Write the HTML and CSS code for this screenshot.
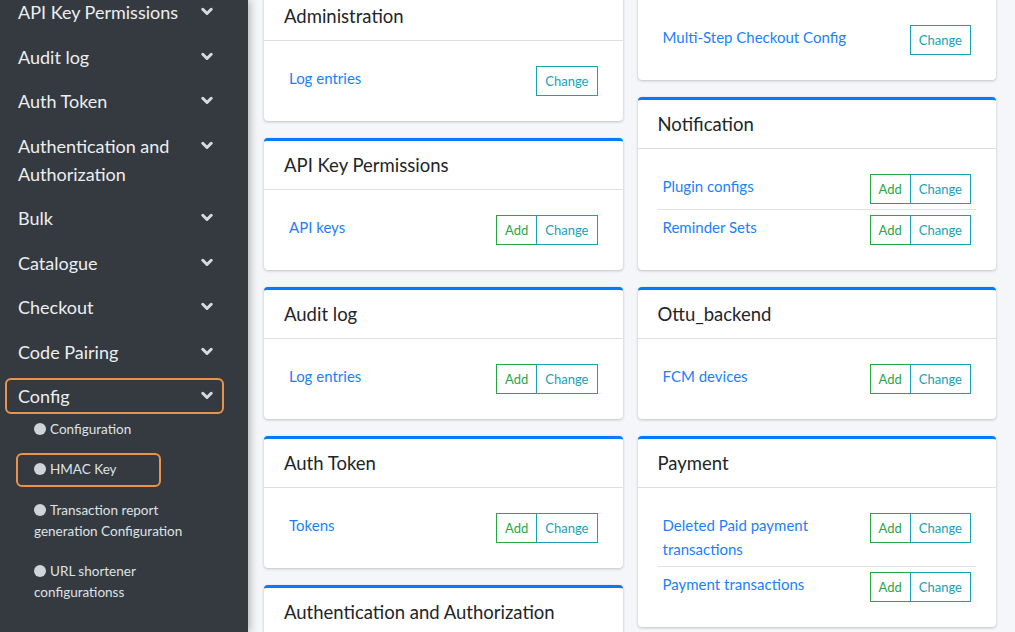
FILE: index.html
```html
<!DOCTYPE html>
<html lang="en">
<head>
<meta charset="utf-8">
<title>Site administration</title>
<link rel="stylesheet" href="styles.css">
</head>
<body>
<div class="layout">
  <aside class="sidebar">
    <ul class="nav">
      <li class="nav-item"><a class="nav-link"><span class="nav-text">API Key Permissions</span><svg class="chev" viewBox="0 0 12 28"><path d="M1.8 11.3 L6 15.5 L10.2 11.3"/></svg></a></li>
      <li class="nav-item"><a class="nav-link"><span class="nav-text">Audit log</span><svg class="chev" viewBox="0 0 12 28"><path d="M1.8 11.3 L6 15.5 L10.2 11.3"/></svg></a></li>
      <li class="nav-item"><a class="nav-link"><span class="nav-text">Auth Token</span><svg class="chev" viewBox="0 0 12 28"><path d="M1.8 11.3 L6 15.5 L10.2 11.3"/></svg></a></li>
      <li class="nav-item"><a class="nav-link"><span class="nav-text">Authentication and Authorization</span><svg class="chev" viewBox="0 0 12 28"><path d="M1.8 11.3 L6 15.5 L10.2 11.3"/></svg></a></li>
      <li class="nav-item"><a class="nav-link"><span class="nav-text">Bulk</span><svg class="chev" viewBox="0 0 12 28"><path d="M1.8 11.3 L6 15.5 L10.2 11.3"/></svg></a></li>
      <li class="nav-item"><a class="nav-link"><span class="nav-text">Catalogue</span><svg class="chev" viewBox="0 0 12 28"><path d="M1.8 11.3 L6 15.5 L10.2 11.3"/></svg></a></li>
      <li class="nav-item"><a class="nav-link"><span class="nav-text">Checkout</span><svg class="chev" viewBox="0 0 12 28"><path d="M1.8 11.3 L6 15.5 L10.2 11.3"/></svg></a></li>
      <li class="nav-item"><a class="nav-link"><span class="nav-text">Code Pairing</span><svg class="chev" viewBox="0 0 12 28"><path d="M1.8 11.3 L6 15.5 L10.2 11.3"/></svg></a></li>
      <li class="nav-item open"><a class="nav-link focused"><span class="nav-text">Config</span><svg class="chev" viewBox="0 0 12 28"><path d="M1.8 11.3 L6 15.5 L10.2 11.3"/></svg></a>
        <ul class="subnav">
          <li class="sub-item"><a class="sub-link"><span class="dot"></span>Configuration</a></li>
          <li class="sub-item"><a class="sub-link focused"><span class="dot"></span>HMAC Key</a></li>
          <li class="sub-item"><a class="sub-link"><span class="dot"></span>Transaction report generation Configuration</a></li>
          <li class="sub-item"><a class="sub-link"><span class="dot"></span>URL shortener configurationss</a></li>
        </ul>
      </li>
    </ul>
  </aside>

  <main class="content">
    <div class="col col-left">
      <section class="card">
        <header class="card-header"><h3 class="card-title">Administration</h3></header>
        <div class="card-body">
          <div class="row"><a class="model">Log entries</a><div class="btns"><a class="btn btn-change">Change</a></div></div>
        </div>
      </section>
      <section class="card">
        <header class="card-header"><h3 class="card-title">API Key Permissions</h3></header>
        <div class="card-body">
          <div class="row"><a class="model">API keys</a><div class="btns"><a class="btn btn-add">Add</a><a class="btn btn-change">Change</a></div></div>
        </div>
      </section>
      <section class="card">
        <header class="card-header"><h3 class="card-title">Audit log</h3></header>
        <div class="card-body">
          <div class="row"><a class="model">Log entries</a><div class="btns"><a class="btn btn-add">Add</a><a class="btn btn-change">Change</a></div></div>
        </div>
      </section>
      <section class="card">
        <header class="card-header"><h3 class="card-title">Auth Token</h3></header>
        <div class="card-body">
          <div class="row"><a class="model">Tokens</a><div class="btns"><a class="btn btn-add">Add</a><a class="btn btn-change">Change</a></div></div>
        </div>
      </section>
      <section class="card">
        <header class="card-header"><h3 class="card-title">Authentication and Authorization</h3></header>
        <div class="card-body"></div>
      </section>
    </div>

    <div class="col col-right">
      <section class="card">
        <header class="card-header"><h3 class="card-title"></h3></header>
        <div class="card-body">
          <div class="row"><a class="model">Multi-Step Checkout Config</a><div class="btns"><a class="btn btn-change">Change</a></div></div>
        </div>
      </section>
      <section class="card">
        <header class="card-header"><h3 class="card-title">Notification</h3></header>
        <div class="card-body">
          <div class="row"><a class="model">Plugin configs</a><div class="btns"><a class="btn btn-add">Add</a><a class="btn btn-change">Change</a></div></div>
          <div class="row"><a class="model">Reminder Sets</a><div class="btns"><a class="btn btn-add">Add</a><a class="btn btn-change">Change</a></div></div>
        </div>
      </section>
      <section class="card">
        <header class="card-header"><h3 class="card-title">Ottu_backend</h3></header>
        <div class="card-body">
          <div class="row"><a class="model">FCM devices</a><div class="btns"><a class="btn btn-add">Add</a><a class="btn btn-change">Change</a></div></div>
        </div>
      </section>
      <section class="card">
        <header class="card-header"><h3 class="card-title">Payment</h3></header>
        <div class="card-body">
          <div class="row"><a class="model">Deleted Paid payment transactions</a><div class="btns"><a class="btn btn-add">Add</a><a class="btn btn-change">Change</a></div></div>
          <div class="row"><a class="model">Payment transactions</a><div class="btns"><a class="btn btn-add">Add</a><a class="btn btn-change">Change</a></div></div>
        </div>
      </section>
    </div>
  </main>
</div>
</body>
</html>
```

FILE: styles.css
```css
* { box-sizing: border-box; }
html, body { margin: 0; height: 100%; }
body {
  font-family: Lato, "Liberation Sans", sans-serif;
  background: #f4f6f9;
  overflow: hidden;
  color: #212529;
}
a { text-decoration: none; cursor: pointer; }

.layout { display: flex; height: 632px; }

/* Sidebar */
.sidebar {
  width: 248px;
  flex: none;
  background: #343a40;
  box-shadow: 2px 0 8px rgba(0, 0, 0, .28);
  position: relative;
  z-index: 1;
  overflow: hidden;
}
.nav {
  list-style: none;
  margin: -6px 0 0;
  padding: 0 24px 0 5px;
}
.nav-item { margin-bottom: 8.5px; }
.nav-item.open { margin-bottom: 0; }
.nav-link {
  display: flex;
  align-items: flex-start;
  border: 2px solid transparent;
  border-radius: 6px;
  padding: 2px 9px 2px 11px;
  color: #eceef1;
  font-size: 18px;
  line-height: 28px;
}
.nav-text { flex: 1; }
.chev {
  width: 12px;
  height: 28px;
  flex: none;
  margin-left: 8px;
}
.chev path {
  fill: none;
  stroke: #d6dbe1;
  stroke-width: 3;
  stroke-linecap: round;
  stroke-linejoin: round;
}
.focused { border-color: #e8944a; }

.subnav {
  list-style: none;
  margin: -2px 0 0;
  padding: 0;
}
.sub-item { margin-bottom: 6.5px; }
.sub-link {
  display: block;
  margin-left: 11px;
  border: 2px solid transparent;
  border-radius: 6px;
  padding: 4.5px 8px 4.5px 16px;
  color: #dfe2e6;
  font-size: 13.5px;
  line-height: 21px;
}
.sub-link.focused { width: 145px; border-color: #e8944a; }
.dot {
  display: inline-block;
  width: 12px;
  height: 12px;
  border-radius: 50%;
  background: #d0d4da;
  margin-right: 4px;
  vertical-align: -1px;
}

/* Content */
.content {
  flex: 1;
  display: grid;
  grid-template-columns: 1fr 1fr;
  column-gap: 15px;
  padding: 0 19px 0 16px;
  align-items: start;
}
.col-left { margin-top: -11px; }
.col-right { margin-top: -52px; }

.card {
  background: #fff;
  border-top: 3px solid #007bff;
  border-radius: 4px;
  box-shadow: 0 0 1px rgba(0, 0, 0, .125), 0 1px 3px rgba(0, 0, 0, .2);
  margin-bottom: 17px;
}
.card-header {
  padding: 12px 20px;
  border-bottom: 1px solid rgba(0, 0, 0, .125);
}
.card-title {
  margin: 0;
  min-height: 24px;
  font-size: 18.5px;
  line-height: 24px;
  font-weight: 400;
  color: #212529;
}
.card-body { padding: 20px; min-height: 80px; }
.row {
  display: flex;
  align-items: flex-start;
  gap: 10px;
  padding: 5px;
}
.row + .row { border-top: 1px solid #dee2e6; }
.model {
  flex: 1;
  color: #1a7fff;
  font-size: 15px;
  line-height: 24px;
}
.btns { display: flex; flex: none; }
.btn {
  display: block;
  height: 30px;
  line-height: 28px;
  padding: 0 8px;
  font-size: 13px;
  border: 1px solid;
  background: #fff;
}
.btn-add { color: #28a745; border-color: #28a745; }
.btn-change { color: #17a2b8; border-color: #17a2b8; }
.btn-add + .btn-change { margin-left: -1px; }
```
